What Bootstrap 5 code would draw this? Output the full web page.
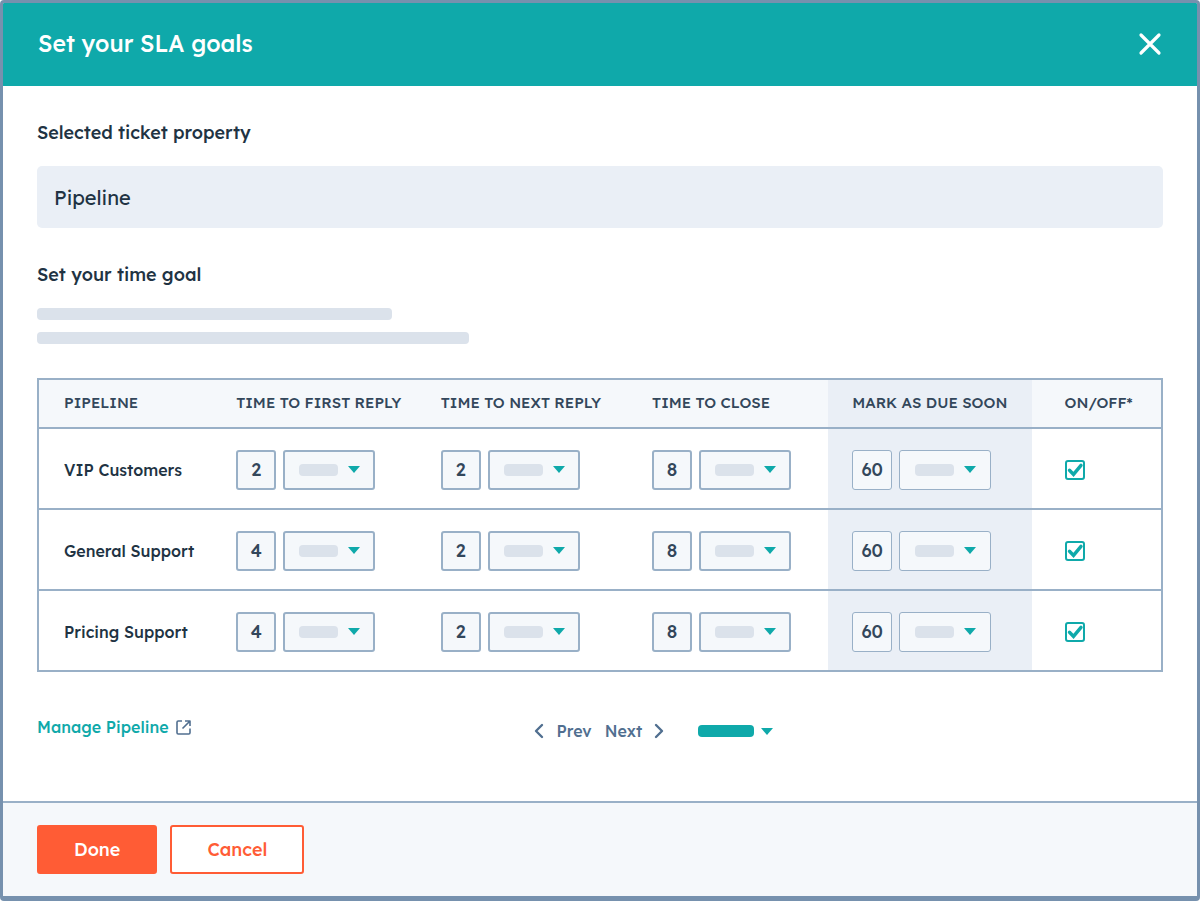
<!DOCTYPE html>
<html lang="en">
<head>
<meta charset="utf-8">
<meta name="viewport" content="width=device-width, initial-scale=1">
<title>Set your SLA goals</title>
<link href="https://cdn.jsdelivr.net/npm/bootstrap@5.3.0/dist/css/bootstrap.min.css" rel="stylesheet">
<style>
  :root {
    --teal: #0fa9aa;
    --ink: #213343;
    --slate: #33475b;
    --steel: #516f90;
    --line: #99b0c7;
    --mist: #f5f8fb;
    --haze: #eaeff6;
    --bone: #dbe2eb;
    --orange: #ff5c35;
  }
  body { font-family: Lexend, Inter, sans-serif; font-weight: 500; color: var(--ink); }
  .sla-dialog { border: 3px solid #7691ae; border-bottom-width: 5px; border-radius: 4px; overflow: hidden; }
  .sla-header { background: var(--teal); height: 83px; padding: 0 35px 2px 35px; }
  .sla-header h1 { font-size: 23px; line-height: 30px; font-weight: 500; }
  .close-btn { line-height: 0; }
  .sla-main { padding: 36px 34px; }
  .field-title { font-size: 18px; line-height: 22px; font-weight: 500; margin-bottom: 22px; }
  .form-control.property-box { height: 62px; padding: 0 17px; background: var(--haze); border: 0; border-radius: 5px; font-size: 20px; font-weight: 400; color: var(--ink); margin-bottom: 36px; }
  .bone { display: block; height: 12px; border-radius: 4px; background: var(--bone); }
  .bone-short { width: 355px; max-width: 80%; margin-bottom: 12px; }
  .bone-long { width: 432px; max-width: 100%; margin-bottom: 34px; }

  .goal-table { table-layout: fixed; border: 2px solid var(--line); border-collapse: collapse; color: var(--ink); }
  .goal-table th, .goal-table td { padding: 0 0 0 24px; border: 0; border-bottom: 2px solid var(--line); box-shadow: none; background: transparent; vertical-align: middle; white-space: nowrap; font-weight: 500; }
  .goal-table thead th { height: 49px; font-size: 15px; color: var(--slate); background: var(--mist); }
  .goal-table tbody tr { height: 81px; }
  .goal-table tbody th { font-size: 16px; }
  .goal-table tbody th, .goal-table tbody td { padding-top: 2px; }
  .goal-table tr > :first-child { padding-left: 25px; }
  .goal-table .due-soon { background: var(--haze); }
  .goal-table .switch-cell { padding-left: 33px; }
  .w-name { width: 15.5%; } .w-first { width: 18.2%; } .w-next { width: 18.8%; }
  .w-close { width: 17.8%; } .w-due { width: 18.1%; } .w-switch { width: 11.6%; }

  .num-box, .unit-select { height: 40px; border: 2px solid var(--line); border-radius: 3px; background: var(--mist); color: var(--slate); }
  .num-box { width: 40px; padding: 0; text-align: center; font-size: 18px; font-weight: 500; }
  .unit-wrap { width: 92px; }
  .unit-select { width: 100%; appearance: none; }
  .due-soon .num-box, .due-soon .unit-select { border-width: 1px; }
  .unit-face { inset: 0 15px 0 16px; pointer-events: none; }
  .unit-face .bone { width: 39px; }
  .caret { width: 12px; height: 7px; fill: var(--teal); }
  .pair { gap: 7px; }

  .tick { appearance: none; display: block; width: 20px; height: 20px; margin: 0; border: 2px solid var(--teal); border-radius: 3px; background: #fff; }
  .tick-mark { left: 0; top: 0; pointer-events: none; visibility: hidden; }
  .tick:checked + .tick-mark { visibility: visible; }

  .below-table { display: grid; grid-template-columns: 44% 1fr; margin-top: 44px; font-size: 16px; line-height: 22px; }
  .manage-link { color: var(--teal); text-decoration: none; gap: 7px; }
  .pager { padding: 4px 0 0 2px; }
  .pager button { font-weight: 500; color: var(--steel); line-height: 22px; }
  .pager .prev { margin-right: 13px; }
  .page-size .bone { width: 56px; background: var(--teal); }
  .pager .page-size { margin-left: 34px; gap: 7px; }

  .sla-footer { background: var(--mist); border-top: 2px solid var(--line); padding: 22px 34px; gap: 13px; }
  .sla-footer .btn { height: 49px; border: 2px solid var(--orange); border-radius: 3px; font-size: 18px; font-weight: 500; padding: 0 35px; }
  .btn-done, .btn-done:hover { background: var(--orange); color: #fff; }
  .btn-cancel, .btn-cancel:hover { background: #fff; color: var(--orange); }
</style>
</head>
<body>
<svg class="d-none" aria-hidden="true">
  <symbol id="caret" viewBox="0 0 12 7"><path d="M0 0h12L6 7z"/></symbol>
  <symbol id="check" viewBox="0 0 20 20"><path d="M4.500 10.300l4 4.100L16 5.300" fill="none" stroke="#0fa9aa" stroke-width="3.400" stroke-linecap="round"/></symbol>
</svg>
<div class="sla-dialog d-flex flex-column min-vh-100">
  <header class="sla-header d-flex align-items-center justify-content-between text-white">
    <h1 class="m-0">Set your SLA goals</h1>
    <button type="button" class="close-btn btn p-0 border-0" aria-label="Close">
      <svg width="24" height="24" viewBox="0 0 24 24" fill="none" stroke="#fff" stroke-width="3.200" stroke-linecap="round"><path d="M3 3l18 18M21 3L3 21"/></svg>
    </button>
  </header>

  <main class="sla-main flex-grow-1">
    <label for="property" class="field-title d-block">Selected ticket property</label>
    <input id="property" class="form-control property-box" type="text" value="Pipeline" readonly>

    <h2 class="field-title">Set your time goal</h2>
    <span class="bone bone-short"></span>
    <span class="bone bone-long"></span>

    <table class="table goal-table mb-0">
      <thead>
        <tr>
          <th scope="col" class="w-name">PIPELINE</th>
          <th scope="col" class="w-first">TIME TO FIRST REPLY</th>
          <th scope="col" class="w-next">TIME TO NEXT REPLY</th>
          <th scope="col" class="w-close">TIME TO CLOSE</th>
          <th scope="col" class="w-due due-soon">MARK AS DUE SOON</th>
          <th scope="col" class="w-switch switch-cell">ON/OFF*</th>
        </tr>
      </thead>
      <tbody id="goals"></tbody>
    </table>

    <div class="below-table">
      <div><a href="#" class="manage-link d-inline-flex align-items-center">Manage Pipeline
        <svg width="15" height="15" viewBox="0 0 15 15" fill="none" stroke="#516f90" stroke-width="1.6" stroke-linejoin="round"><path d="M6 1H2.200Q1 1 1 2.200v10.600Q1 14 2.200 14h10.600q1.200 0 1.200-1.200V8.500M9 1h5v5M14 1L6.500 8.500"/></svg></a></div>
      <nav class="pager d-flex align-items-start" aria-label="Pages">
        <button type="button" class="prev btn border-0 p-0 d-flex align-items-center">
          <svg class="me-2" width="14" height="16" viewBox="0 0 14 16" fill="none" stroke="#516f90" stroke-width="2.400" stroke-linecap="round" stroke-linejoin="round"><path d="M8 2L2 8l6 6"/></svg>Prev</button>
        <button type="button" class="btn border-0 p-0 d-flex align-items-center">Next
          <svg class="ms-2" width="14" height="16" viewBox="0 0 14 16" fill="none" stroke="#516f90" stroke-width="2.400" stroke-linecap="round" stroke-linejoin="round"><path d="M6 2l6 6-6 6"/></svg></button>
        <button type="button" class="page-size btn border-0 p-0 d-flex align-items-center align-self-center" aria-label="Rows per page">
          <span class="bone"></span><svg class="caret"><use href="#caret"/></svg></button>
      </nav>
    </div>
  </main>

  <footer class="sla-footer d-flex">
    <button type="button" class="btn btn-done">Done</button>
    <button type="button" class="btn btn-cancel">Cancel</button>
  </footer>
</div>
<script src="https://cdn.jsdelivr.net/npm/bootstrap@5.3.0/dist/js/bootstrap.bundle.min.js"></script>
<script>
  const rows = [
    ['VIP Customers', 2, 2, 8, 60],
    ['General Support', 4, 2, 8, 60],
    ['Pricing Support', 4, 2, 8, 60]
  ];
  const goals = ['Time to first reply', 'Time to next reply', 'Time to close', 'Mark as due soon'];
  const pair = (name, goal, value) => `
    <div class="pair d-flex">
      <input class="num-box" type="text" inputmode="numeric" value="${value}" aria-label="${name}: ${goal}">
      <div class="unit-wrap position-relative">
        <select class="unit-select" aria-label="${name}: ${goal} unit"><option></option></select>
        <span class="unit-face position-absolute d-flex align-items-center justify-content-between">
          <span class="bone"></span><svg class="caret"><use href="#caret"/></svg>
        </span>
      </div>
    </div>`;
  document.getElementById('goals').innerHTML = rows.map(([name, ...values]) => `
    <tr>
      <th scope="row">${name}</th>
      ${values.map((v, i) => `<td class="${i === 3 ? 'due-soon' : ''}">${pair(name, goals[i], v)}</td>`).join('')}
      <td class="switch-cell"><div class="position-relative">
        <input class="tick" type="checkbox" checked aria-label="${name} on">
        <svg class="tick-mark position-absolute" width="20" height="20"><use href="#check"/></svg>
      </div></td>
    </tr>`).join('');
</script>
</body>
</html>
